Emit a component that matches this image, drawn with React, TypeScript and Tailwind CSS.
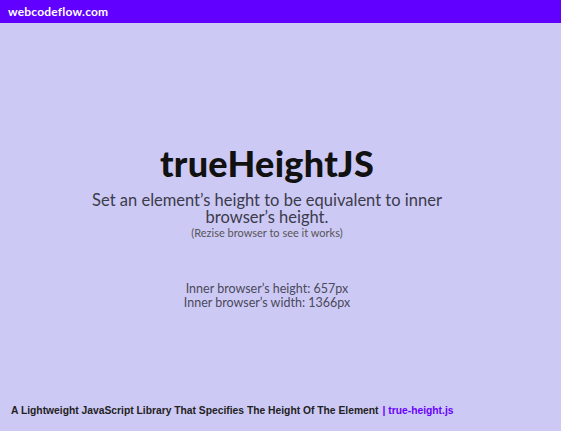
export default function App() {
  return (
    <div className="w-[561px] h-[431px] bg-[#cdc9f5] flex flex-col overflow-hidden">
      <div className="h-[23px] bg-[#6200ff] flex items-center px-[8px]">
        <span className="text-white text-[12px] font-bold font-['Lato',sans-serif] tracking-[0.2px]">
          webcodeflow.com
        </span>
      </div>
      <div className="flex-1 flex flex-col items-center pr-[27px] font-['Lato',sans-serif]">
        <h1 className="mt-[120px] text-[36px] leading-[40px] font-black text-[#111] tracking-[0.3px]">
          trueHeightJS
        </h1>
        <p className="mt-[9px] text-[16.5px] leading-[17px] text-[#3b3b4a] text-center w-[370px]">
          Set an element’s height to be equivalent to inner browser’s height.
        </p>
        <p className="text-[11px] leading-[13px] text-[#555]">
          (Rezise browser to see it works)
        </p>
        <div className="mt-[43px] text-[12.5px] leading-[14px] text-[#4a4a5a] text-center">
          <div>Inner browser’s height: 657px</div>
          <div>Inner browser’s width: 1366px</div>
        </div>
      </div>
      <div className="h-[40px] flex items-center px-[11px] font-['Liberation_Sans',sans-serif] text-[10.3px] font-bold text-[#222]">
        A Lightweight JavaScript Library That Specifies The Height Of The Element
        <span className="text-[#6a00ff] ml-[4px]">| true-height.js</span>
      </div>
    </div>
  );
}
